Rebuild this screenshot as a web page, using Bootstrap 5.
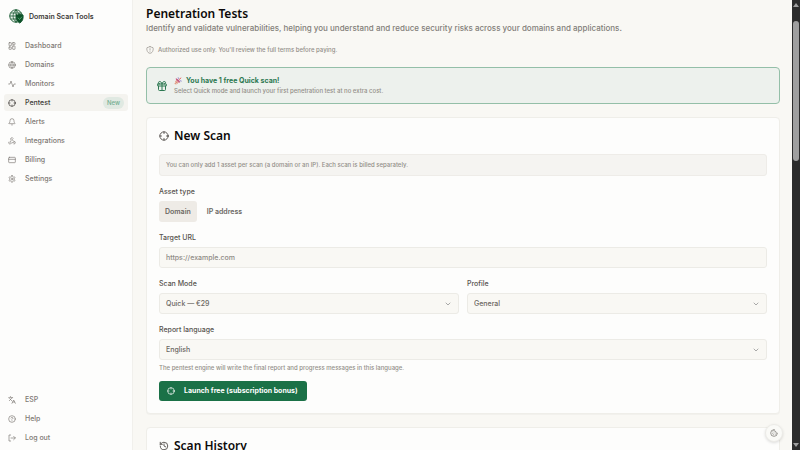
<!DOCTYPE html>
<html lang="en">
<head>
<meta charset="utf-8">
<meta name="viewport" content="width=device-width, initial-scale=1">
<title>Penetration Tests</title>
<link href="https://cdn.jsdelivr.net/npm/bootstrap@5.3.0/dist/css/bootstrap.min.css" rel="stylesheet">
<style>
  body { font-family: Inter, "Liberation Sans", sans-serif; font-size: 7px; line-height: 12px; color: #57534e; background: #f9f8f4; }
  svg { fill: none; stroke: currentColor; stroke-width: 2; stroke-linecap: round; stroke-linejoin: round; flex: none; }
  h1, h2 { font-family: "Noto Sans", sans-serif; font-weight: 600; color: #0c0a09; }
  h1 { font-size: 12px; line-height: 16px; }
  h2 { font-size: 12px; line-height: 12px; }
  .ico { width: 8px; height: 8px; }
  .ico-md { width: 10px; height: 10px; }
  .ico-lg { width: 12px; height: 12px; }
  .sidebar { width: 133px; background: #fdfdfc; border-right: 1px solid #f1f0ec; padding: 8px 4px 4px; }
  .brand { font-size: 7px; font-weight: 600; color: #3a3835; height: 17px; gap: 5px; padding-left: 5px; margin-bottom: 12px; }
  .brand svg { width: 15px; height: 15px; }
  .menu { gap: 2px; }
  .menu .nav-link { height: 17px; padding: 0 4px; gap: 9px; color: #7d7974; border-radius: 3px; font-weight: 500; }
  .menu .nav-link.active { background: #f4f3ef; color: #3d3a36; }
  .tag-new { font-size: 6px; line-height: 12px; padding: 0 4px; color: #72ab8f; background: #e0e9e2; }
  .content { padding: 6px 12px 0 13px; }
  .lead-text { font-size: 8px; font-weight: 500; color: #827e79; }
  .muted { font-size: 6px; font-weight: 500; color: #928e88; }
  .note { gap: 4px; margin-top: 10px; margin-bottom: 11px; }
  .promo { border: 1px solid #94bfa8; border-radius: 4px; background: #edf1ed; color: #2c7851; padding: 8px 9px; gap: 6px; margin-bottom: 13px; }
  .promo strong { font-size: 7px; line-height: 10px; font-weight: 700; gap: 4px; }
  .promo .muted { line-height: 9px; }
  .panel { background: #fdfdfc; border: 1px solid #efeee9; border-radius: 4px; padding: 12px; margin-bottom: 13px; box-shadow: 0 1px 1px #00000008; }
  .panel h2 { margin-bottom: 12px; gap: 5px; }
  .panel h2 svg { color: #44403c; }
  .hint { background: #f5f4f1; border: 1px solid #eeece8; border-radius: 3px; padding: 4px 6px; margin-bottom: 9px; }
  .field { margin-bottom: 9px; }
  .field label, .field legend { display: block; font-size: 7px; font-weight: 500; line-height: 14px; margin-bottom: 2px; color: #57534e; float: none; }
  .form-control, .form-select { height: 21px; font-size: 7px; font-weight: 500; line-height: 12px; padding: 0 6px; color: #6b6762; background-color: #f9f8f4; border: 1px solid #ecebe6; border-radius: 3px; }
  .form-select { background-image: url("data:image/svg+xml,%3Csvg xmlns='http://www.w3.org/2000/svg' viewBox='0 0 24 24' fill='none' stroke='%23999' stroke-width='2.5' stroke-linecap='round' stroke-linejoin='round'%3E%3Cpath d='m6 9 6 6 6-6'/%3E%3C/svg%3E"); background-size: 8px 8px; background-position: right 6px center; }
  .form-control::placeholder { color: #8f8b85; }
  .seg .btn, .btn-launch { height: 21px; font-size: 7px; line-height: 12px; padding: 0 6px; border: 0; border-radius: 3px; font-weight: 600; }
  .seg .btn { color: #6b6762; }
  .seg .btn.active { background: #eeebe6; color: #6b6762; }
  .help { line-height: 10px; margin-top: 3px; margin-bottom: 8px; }
  .btn-launch, .btn-launch:hover { height: 20px; background: #1b7147; color: #fff; font-weight: 700; padding: 0 9px 0 8px; gap: 9px; }
  .cookie { width: 18px; height: 18px; right: 17px; bottom: 8px; background: #fafaf7; border: 1px solid #ebeae6; box-shadow: 0 1px 3px #00000022; color: #6b6863; }
  .scroll { width: 8px; background: #2c2c2c; padding: 3px 1px; }
  .scroll i { width: 6px; height: 4px; background: #9f9f9f; }
  .arrow-up { clip-path: polygon(50% 0, 100% 100%, 0 100%); }
  .arrow-down { clip-path: polygon(0 0, 100% 0, 50% 100%); }
  .thumb { height: 31vh; width: 6px; margin-top: 14px; border-radius: 3px; background: #9f9f9f; }
</style>
<script src="https://cdn.jsdelivr.net/npm/bootstrap@5.3.0/dist/js/bootstrap.bundle.min.js"></script>
</head>
<body>
<svg class="d-none" aria-hidden="true">
  <symbol id="target" viewBox="0 0 24 24"><circle cx="12" cy="12" r="10"/><path d="M22 12h-4M6 12H2M12 6V2M12 22v-4"/></symbol>
</svg>
<div class="d-flex vh-100 overflow-hidden">
  <aside class="sidebar d-flex flex-column flex-shrink-0">
    <div class="brand d-flex align-items-center">
      <svg viewBox="0 0 30 30"><circle cx="14" cy="14" r="12.5" fill="#e8f2ea" stroke="#24623c" stroke-width="2"/><path d="M14 2v24M2 14h24M4 8h20M4 20h20M14 2c-8 7-8 17 0 24M14 2c8 7 8 17 0 24" stroke="#24623c" stroke-width="1.7"/><path d="M15 12c3 0 5-1 6.500-2.500C23 11 25 12 28 12c1 7-1 13-6.500 16C16 25 14 19 15 12z" fill="#0d5229" stroke="#0d5229"/><path d="m18.500 18 2.500 3 4.500-5" stroke="#4fa06c" stroke-width="2"/></svg>
      <span>Domain Scan Tools</span>
    </div>
    <nav class="menu nav flex-column flex-nowrap" aria-label="Main">
      <a class="nav-link d-flex align-items-center" href="#"><svg class="ico" viewBox="0 0 24 24"><rect x="3" y="2" width="7" height="9" rx="1"/><rect x="14" y="2" width="7" height="6" rx="1"/><rect x="14" y="12" width="7" height="10" rx="1"/><rect x="3" y="15" width="7" height="7" rx="1"/></svg>Dashboard</a>
      <a class="nav-link d-flex align-items-center" href="#"><svg class="ico" viewBox="0 0 24 24"><circle cx="12" cy="12" r="10"/><path d="M12 2a14.500 14.500 0 0 0 0 20 14.500 14.500 0 0 0 0-20M2 12h20"/></svg>Domains</a>
      <a class="nav-link d-flex align-items-center" href="#"><svg class="ico" viewBox="0 0 24 24"><path d="M22 12h-4l-3 9L9 3l-3 9H2"/></svg>Monitors</a>
      <a class="nav-link active d-flex align-items-center" href="#" aria-current="page"><svg class="ico"><use href="#target"/></svg>Pentest<span class="tag-new rounded-pill ms-auto">New</span></a>
      <a class="nav-link d-flex align-items-center" href="#"><svg class="ico" viewBox="0 0 24 24"><path d="M10.300 21a2 2 0 0 0 3.400 0M3.300 15.300A1 1 0 0 0 4 17h16a1 1 0 0 0 .7-1.700C19.400 14 18 12.500 18 8A6 6 0 0 0 6 8c0 4.500-1.400 6-2.700 7.300"/></svg>Alerts</a>
      <a class="nav-link d-flex align-items-center" href="#"><svg class="ico" viewBox="0 0 24 24"><path d="M18 16.980h-5.990c-1.100 0-1.950.94-2.480 1.900A4 4 0 0 1 2 17c.01-.7.200-1.400.57-2"/><path d="m6 17 3.130-5.780c.53-.97.100-2.180-.5-3.100a4 4 0 1 1 6.890-4.060"/><path d="m12 6 3.130 5.730C15.660 12.700 16.900 13 18 13a4 4 0 0 1 0 8"/></svg>Integrations</a>
      <a class="nav-link d-flex align-items-center" href="#"><svg class="ico" viewBox="0 0 24 24"><rect x="2" y="4" width="20" height="16" rx="2"/><path d="M2 10h20"/></svg>Billing</a>
      <a class="nav-link d-flex align-items-center" href="#"><svg class="ico" viewBox="0 0 24 24"><path d="M12.200 2h-.4a2 2 0 0 0-2 2v.2a2 2 0 0 1-1 1.700l-.4.300a2 2 0 0 1-2 0l-.2-.1a2 2 0 0 0-2.700.7l-.2.400a2 2 0 0 0 .7 2.700l.2.100a2 2 0 0 1 1 1.700v.5a2 2 0 0 1-1 1.800l-.2.100a2 2 0 0 0-.7 2.700l.2.400a2 2 0 0 0 2.700.7l.2-.1a2 2 0 0 1 2 0l.4.300a2 2 0 0 1 1 1.700v.2a2 2 0 0 0 2 2h.4a2 2 0 0 0 2-2v-.2a2 2 0 0 1 1-1.700l.4-.3a2 2 0 0 1 2 0l.2.100a2 2 0 0 0 2.700-.7l.2-.4a2 2 0 0 0-.7-2.700l-.2-.1a2 2 0 0 1-1-1.700v-.5a2 2 0 0 1 1-1.800l.2-.1a2 2 0 0 0 .7-2.700l-.2-.4a2 2 0 0 0-2.700-.7l-.2.100a2 2 0 0 1-2 0l-.4-.3a2 2 0 0 1-1-1.700V4a2 2 0 0 0-2-2z"/><circle cx="12" cy="12" r="3"/></svg>Settings</a>
    </nav>
    <nav class="menu nav flex-column flex-nowrap mt-auto" aria-label="Account">
      <a class="nav-link d-flex align-items-center" href="#"><svg class="ico" viewBox="0 0 24 24"><path d="m5 8 6 6M4 14l6-6 2-3M2 5h12M7 2h1M22 22l-5-10-5 10M14 18h6"/></svg>ESP</a>
      <a class="nav-link d-flex align-items-center" href="#"><svg class="ico" viewBox="0 0 24 24"><circle cx="12" cy="12" r="10"/><path d="M9.100 9a3 3 0 0 1 5.800 1c0 2-3 3-3 3M12 17h.01"/></svg>Help</a>
      <a class="nav-link d-flex align-items-center" href="#"><svg class="ico" viewBox="0 0 24 24"><path d="M8 21H3V3h5M17 17l5-5-5-5M22 12H9"/></svg>Log out</a>
    </nav>
  </aside>

  <main class="content flex-grow-1 overflow-hidden">
    <h1 class="mb-0">Penetration Tests</h1>
    <p class="lead-text mb-0">Identify and validate vulnerabilities, helping you understand and reduce security risks across your domains and applications.</p>
    <p class="note muted d-flex align-items-center"><svg class="ico" viewBox="0 0 24 24"><path d="M12 2c3 1.500 6 2 9 3 1 3 1 5 0 8-1 5-4 8-9 9-5-1-8-4-9-9-1-3-1-5 0-8 3-1 6-1.500 9-3zM12 8v4M12 16h.01"/></svg>Authorized use only. You'll review the full terms before paying.</p>

    <section class="promo d-flex align-items-center">
      <svg class="ico-lg" viewBox="0 0 24 24"><rect x="3" y="8" width="18" height="4" rx="1"/><path d="M12 8v13M19 12v7a2 2 0 0 1-2 2H7a2 2 0 0 1-2-2v-7M7.500 8a2.500 2.500 0 0 1 0-5C11 3 12 8 12 8s1-5 4.500-5a2.500 2.500 0 0 1 0 5"/></svg>
      <div>
        <strong class="d-flex align-items-center"><svg class="ico" viewBox="0 0 24 24"><path d="M2 22 7 6c3 1 9 6 10 10z" fill="#e6a9a0" stroke="none"/><path d="M7 6c1 4 6 9 10 10 1-3-6-11-10-10z" fill="#c2557f" stroke="#c2557f"/><path d="M3 20l3 1M5 14l5 5" stroke="#d98a5c"/><path d="M13 6c2-2 1-3 0-4M18 12c2-1 3-1 4 0" stroke="#7b6cc4" stroke-width="2.500"/><path d="M17 7l3-4" stroke="#e25555" stroke-width="3"/></svg>You have 1 free Quick scan!</strong>
        <div class="muted">Select Quick mode and launch your first penetration test at no extra cost.</div>
      </div>
    </section>

    <form class="panel">
      <h2 class="d-flex align-items-center"><svg class="ico-md"><use href="#target"/></svg>New Scan</h2>
      <div class="hint muted">You can only add 1 asset per scan (a domain or an IP). Each scan is billed separately.</div>
      <fieldset class="field">
        <legend>Asset type</legend>
        <div class="seg d-flex gap-1">
          <button type="button" class="btn active" aria-pressed="true">Domain</button>
          <button type="button" class="btn" aria-pressed="false">IP address</button>
        </div>
      </fieldset>
      <div class="field">
        <label for="url">Target URL</label>
        <input id="url" type="url" class="form-control" placeholder="https://example.com">
      </div>
      <div class="row gx-2">
        <div class="col field">
          <label for="mode">Scan Mode</label>
          <select id="mode" class="form-select"><option>Quick — €29</option></select>
        </div>
        <div class="col field">
          <label for="profile">Profile</label>
          <select id="profile" class="form-select"><option>General</option></select>
        </div>
      </div>
      <div class="field mb-0">
        <label for="lang">Report language</label>
        <select id="lang" class="form-select" aria-describedby="lang-help"><option>English</option></select>
      </div>
      <p id="lang-help" class="help muted">The pentest engine will write the final report and progress messages in this language.</p>
      <button type="submit" class="btn btn-launch d-inline-flex align-items-center"><svg class="ico"><use href="#target"/></svg>Launch free (subscription bonus)</button>
    </form>

    <section class="panel">
      <h2 class="d-flex align-items-center"><svg class="ico-md" viewBox="0 0 24 24"><path d="M3 12a9 9 0 1 0 9-9 9.750 9.750 0 0 0-6.740 2.740L3 8M3 3v5h5M12 7v5l4 2"/></svg>Scan History</h2>
    </section>
  </main>

  <div class="scroll d-flex flex-column align-items-center flex-shrink-0" aria-hidden="true">
    <i class="arrow-up"></i>
    <div class="thumb"></div>
    <i class="arrow-down mt-auto"></i>
  </div>
</div>
<button type="button" class="cookie btn rounded-circle position-fixed p-0 d-flex align-items-center justify-content-center" aria-label="Cookie settings"><svg class="ico" viewBox="0 0 24 24"><path d="M12 2a10 10 0 1 0 10 10 4 4 0 0 1-5-5 4 4 0 0 1-5-5M8.500 8.500h.01M16 15.500h.01M12 12h.01M11 17h.01M7 14h.01"/></svg></button>
</body>
</html>
